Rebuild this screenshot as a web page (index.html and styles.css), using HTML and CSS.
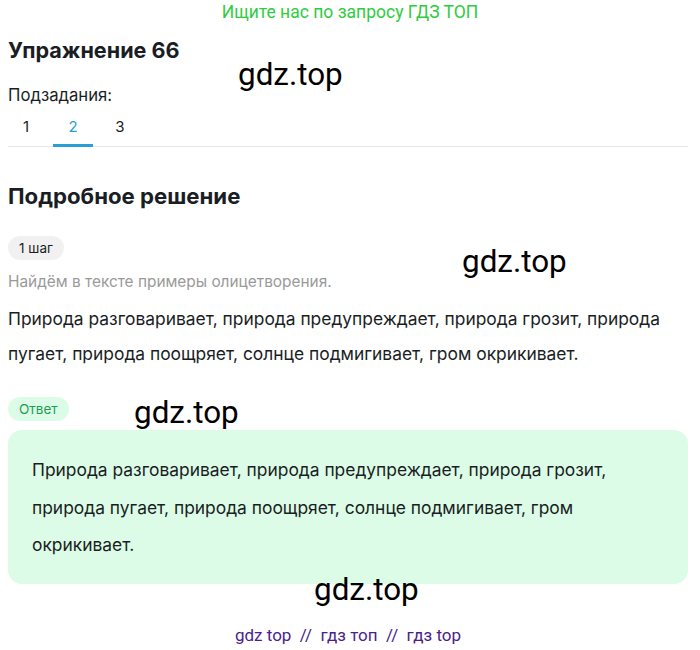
FILE: index.html
```html
<!DOCTYPE html>
<html lang="ru">
<head>
<meta charset="utf-8">
<link rel="stylesheet" href="styles.css">
</head>
<body>
<div class="promo">Ищите нас по запросу ГДЗ ТОП</div>
<main class="page">
  <h1 class="title">Упражнение 66</h1>
  <div class="wm wm1">gdz.top</div>
  <div class="sub-label">Подзадания:</div>
  <nav class="tabs">
    <span class="tab">1</span>
    <span class="tab active">2</span>
    <span class="tab">3</span>
  </nav>
  <h2 class="section">Подробное решение</h2>
  <div class="pill">1 шаг</div>
  <p class="hint">Найдём в тексте примеры олицетворения.</p>
  <div class="wm wm2">gdz.top</div>
  <p class="text">Природа разговаривает, природа предупреждает, природа грозит, природа пугает, природа поощряет, солнце подмигивает, гром окрикивает.</p>
  <div class="pill pill-green">Ответ</div>
  <div class="wm wm3">gdz.top</div>
  <div class="answer">
    <p class="answer-text">Природа разговаривает, природа предупреждает, природа грозит, природа пугает, природа поощряет, солнце подмигивает, гром окрикивает.</p>
  </div>
  <div class="wm wm4">gdz.top</div>
  <footer class="footer">gdz top &nbsp;//&nbsp; гдз топ &nbsp;//&nbsp; гдз top</footer>
</main>
</body>
</html>
```
FILE: styles.css
```css
* { box-sizing: border-box; }
html, body { margin: 0; padding: 0; background: #fff; }
body {
  font-family: Inter, "Noto Sans", sans-serif;
  color: #1a1e24;
  position: relative;
}
.promo {
  font-family: Roboto, "Liberation Sans", sans-serif;
  color: #2ecc40;
  font-size: 17.5px;
  text-align: center;
  line-height: 22px;
  padding-top: 1px;
}
.page {
  padding: 0 12px 0 8px;
  display: flex;
  flex-direction: column;
  align-items: flex-start;
}
.title {
  margin: 12px 0 0;
  font-size: 21.6px;
  font-weight: 700;
  line-height: 30px;
}
.wm {
  position: absolute;
  font-family: Roboto, "Liberation Sans", sans-serif;
  font-size: 31.4px;
  color: #000;
  line-height: 34px;
}
.wm1 { left: 238px; top: 58px; }
.wm2 { left: 462px; top: 245px; }
.wm3 { left: 134px; top: 396px; }
.wm4 { left: 314px; top: 573px; }
.sub-label {
  margin-top: 19px;
  font-size: 16.7px;
  line-height: 22px;
}
.tabs {
  display: flex;
  gap: 7px;
  align-self: stretch;
  border-bottom: 1px solid #e6e6e6;
  margin-top: 4px;
}
.tab {
  width: 40px;
  text-align: center;
  font-size: 15px;
  line-height: 34px;
  border-bottom: 3px solid transparent;
  margin-bottom: -1px;
  color: #1a1e24;
}
.tab:first-child { margin-left: -2px; }
.tab.active {
  color: #2a9fd6;
  border-bottom-color: #2a9fd6;
}
.section {
  margin: 34px 0 0;
  font-size: 22.2px;
  font-weight: 700;
  line-height: 30px;
}
.pill {
  margin-top: 25px;
  background: #f1f1f1;
  border-radius: 13px;
  font-size: 13.5px;
  line-height: 24px;
  padding: 0 11px;
}
.hint {
  margin: 11px 0 0;
  color: #9a9a9a;
  font-size: 15.4px;
  line-height: 22px;
}
.text {
  margin: 8px 0 0;
  font-size: 17.4px;
  line-height: 35px;
}
.pill-green {
  margin-top: 26px;
  background: #dcfce7;
  color: #1f9d55;
}
.answer {
  align-self: stretch;
  margin-top: 9px;
  background: #dcfce7;
  border-radius: 14px;
  padding: 21px 24px 20px;
}
.answer-text {
  margin: 0;
  font-size: 17.4px;
  line-height: 37.5px;
}
.footer {
  align-self: center;
  margin-top: 40px;
  font-family: Roboto, "Liberation Sans", sans-serif;
  color: #4a1e8c;
  font-size: 17px;
  line-height: 22px;
}
```
